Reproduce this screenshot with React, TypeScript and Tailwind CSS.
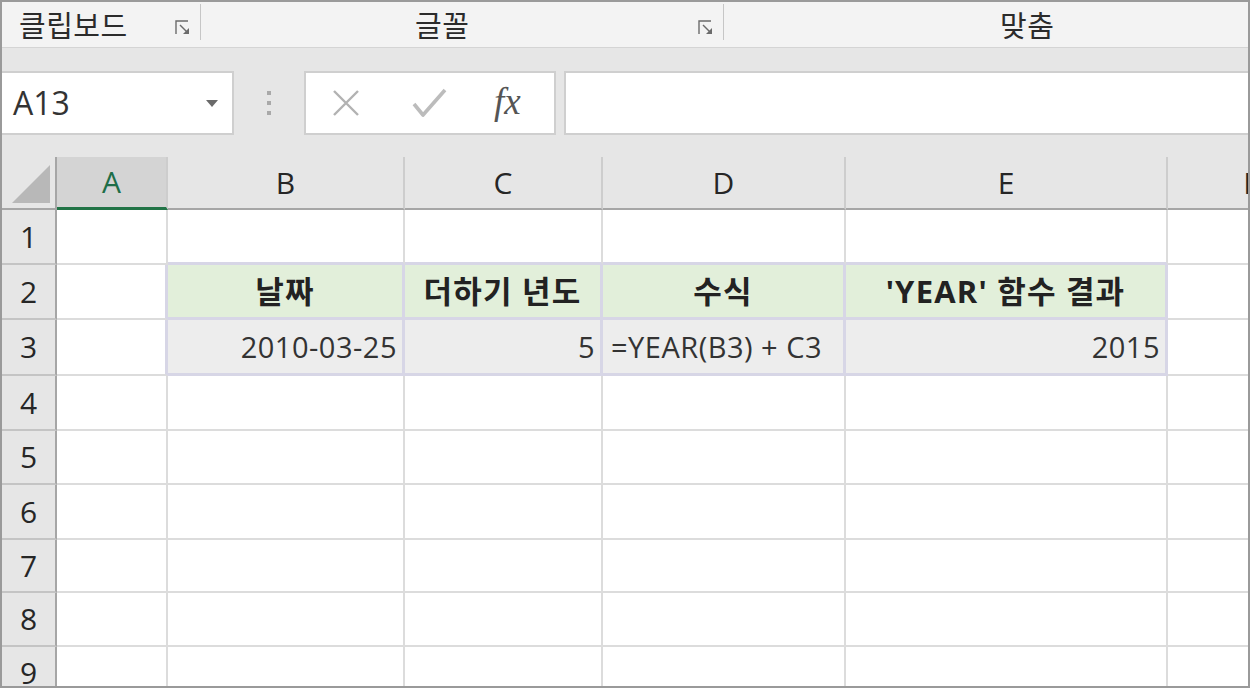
import React from "react";

const cols = [
  { key: "A", w: "w-[111px]" },
  { key: "B", w: "w-[237px]" },
  { key: "C", w: "w-[198px]" },
  { key: "D", w: "w-[243px]" },
  { key: "E", w: "w-[322px]" },
  { key: "F", w: "w-[168px]" },
];

const rowHeights = [
  "h-[55px]",
  "h-[55px]",
  "h-[56px]",
  "h-[55px]",
  "h-[54px]",
  "h-[55px]",
  "h-[53px]",
  "h-[54px]",
  "h-[54px]",
];

type Cell = { text: string; align: "left" | "center" | "right"; bold?: boolean };

const data: Record<string, Cell> = {
  "2B": { text: "날짜", align: "center", bold: true },
  "2C": { text: "더하기 년도", align: "center", bold: true },
  "2D": { text: "수식", align: "center", bold: true },
  "2E": { text: "'YEAR' 함수 결과", align: "center", bold: true },
  "3B": { text: "2010-03-25", align: "right" },
  "3C": { text: "5", align: "right" },
  "3D": { text: "=YEAR(B3) + C3", align: "left" },
  "3E": { text: "2015", align: "right" },
};

const tableCols = ["B", "C", "D", "E"];

function Launcher() {
  return (
    <svg width="18" height="18" viewBox="0 0 18 18" className="text-[#6b6b6b]">
      <path d="M2 15V2h12" fill="none" stroke="currentColor" strokeWidth="1.4" />
      <path d="M6 6l8 8" fill="none" stroke="currentColor" strokeWidth="1.4" />
      <path d="M15 9v6H9z" fill="currentColor" />
    </svg>
  );
}

function GridCell({ row, col, w }: { row: number; col: string; w: string }) {
  const inTable = row >= 2 && row <= 3 && tableCols.includes(col);
  const lavRight = row >= 2 && row <= 3 && (col === "A" || tableCols.includes(col));
  const lavBottom = row >= 1 && row <= 3 && tableCols.includes(col);
  const cell = data[`${row}${col}`];

  const bg = inTable ? (row === 2 ? "bg-[#e2efda]" : "bg-[#ededed]") : "bg-white";
  const right = lavRight ? "border-r-[3px] border-r-[#d7d6e6]" : "border-r-2 border-r-[#dcdcdc]";
  const bottom = lavBottom ? "border-b-[3px] border-b-[#d7d6e6]" : "border-b-2 border-b-[#dcdcdc]";
  const justify =
    cell?.align === "center" ? "justify-center" : cell?.align === "right" ? "justify-end pr-[5px]" : "justify-start pl-[8px]";

  return (
    <div className={`flex shrink-0 items-center ${w} ${bg} ${right} ${bottom} ${justify}`}>
      {cell && (
        <span
          className={`whitespace-nowrap leading-none ${
            cell.bold ? "text-[31px] font-bold tracking-[1.2px] text-[#222222]" : "text-[29px] tracking-[0.5px] text-[#333333]"
          }`}
        >
          {cell.text}
        </span>
      )}
    </div>
  );
}

export default function App() {
  return (
    <div className="h-[688px] w-[1250px] overflow-hidden border-2 border-[#9a9a9a] bg-[#e6e6e6] font-['Open_Sans','Noto_Sans_CJK_KR',sans-serif]">
      {/* ribbon group labels */}
      <div className="flex h-[46px] border-b border-[#d4d4d4] bg-[#f3f3f3] font-['Noto_Sans_CJK_KR',sans-serif] text-[29px] leading-none tracking-[0.5px] text-[#2b2b2b]">
        <div className="flex w-[198px] shrink-0 items-center pl-[17px] pr-[8px]">
          <span>클립보드</span>
          <span className="ml-auto mt-[6px]">
            <Launcher />
          </span>
        </div>
        <div className="mt-[2px] h-[36px] w-px shrink-0 bg-[#c6c6c6]" />
        <div className="flex w-[522px] shrink-0 items-center pl-[214px] pr-[8px]">
          <span>글꼴</span>
          <span className="ml-auto mt-[6px]">
            <Launcher />
          </span>
        </div>
        <div className="mt-[2px] h-[36px] w-px shrink-0 bg-[#c6c6c6]" />
        <div className="flex flex-1 items-center pl-[276px]">
          <span>맞춤</span>
        </div>
      </div>

      <div className="h-[23px]" />

      {/* formula bar */}
      <div className="flex h-[64px]">
        <div className="flex w-[232px] shrink-0 items-center border-2 border-l-0 border-[#cfcfcf] bg-white pl-[11px] pr-[14px]">
          <span className="text-[32px] leading-none text-[#333]">A13</span>
          <svg width="12" height="7" viewBox="0 0 12 7" className="ml-auto">
            <path d="M0 0h12L6 7z" fill="#6a6a6a" />
          </svg>
        </div>
        <div className="flex w-[70px] shrink-0 items-center justify-center">
          <div className="flex flex-col gap-[6px]">
            <div className="h-[4px] w-[4px] bg-[#a9a9a9]" />
            <div className="h-[4px] w-[4px] bg-[#a9a9a9]" />
            <div className="h-[4px] w-[4px] bg-[#a9a9a9]" />
          </div>
        </div>
        <div className="flex w-[252px] shrink-0 items-center border-2 border-[#cfcfcf] bg-white">
          <svg width="32" height="32" viewBox="0 0 32 32" className="ml-[24px]">
            <path d="M4 4l24 24M28 4L4 28" stroke="#b2b2b2" strokeWidth="2.4" fill="none" />
          </svg>
          <svg width="36" height="32" viewBox="0 0 36 32" className="ml-[50px]">
            <path d="M2 17l9 11L33 3" stroke="#bcbcbc" strokeWidth="3.6" fill="none" strokeLinejoin="round" />
          </svg>
          <span className="ml-[46px] mt-[-4px] font-['Liberation_Serif',serif] text-[37px] italic leading-none text-[#555]">fx</span>
        </div>
        <div className="ml-[8px] flex-1 border-2 border-r-0 border-[#cfcfcf] bg-white" />
      </div>

      <div className="h-[22px]" />

      {/* sheet */}
      <div className="flex flex-col">
        <div className="flex h-[53px]">
          <div className="relative w-[55px] shrink-0 border-r-2 border-b-2 border-[#a6a6a6] bg-[#e6e6e6]">
            <svg width="55" height="51" viewBox="0 0 55 51" className="absolute left-0 top-0">
              <path d="M10 46h38V8z" fill="#b8b8b8" />
            </svg>
          </div>
          {cols.map((c) => (
            <div
              key={c.key}
              className={`flex shrink-0 items-center justify-center border-r-2 border-r-[#cdcdcd] text-[30px] leading-none ${c.w} ${
                c.key === "A"
                  ? "border-b-[3px] border-b-[#217346] bg-[#d4d4d4] text-[#1e6e48]"
                  : "border-b-2 border-b-[#a6a6a6] bg-[#e6e6e6] text-[#262626]"
              }`}
            >
              {c.key}
            </div>
          ))}
        </div>

        {rowHeights.map((h, i) => {
          const row = i + 1;
          return (
            <div key={row} className={`flex ${h}`}>
              <div className="flex w-[55px] shrink-0 items-center justify-center border-r-2 border-b-2 border-r-[#a6a6a6] border-b-[#c4c4c4] bg-[#e6e6e6] text-[30px] leading-none text-[#262626]">
                {row}
              </div>
              {cols.map((c) => (
                <GridCell key={c.key} row={row} col={c.key} w={c.w} />
              ))}
            </div>
          );
        })}
      </div>
    </div>
  );
}
